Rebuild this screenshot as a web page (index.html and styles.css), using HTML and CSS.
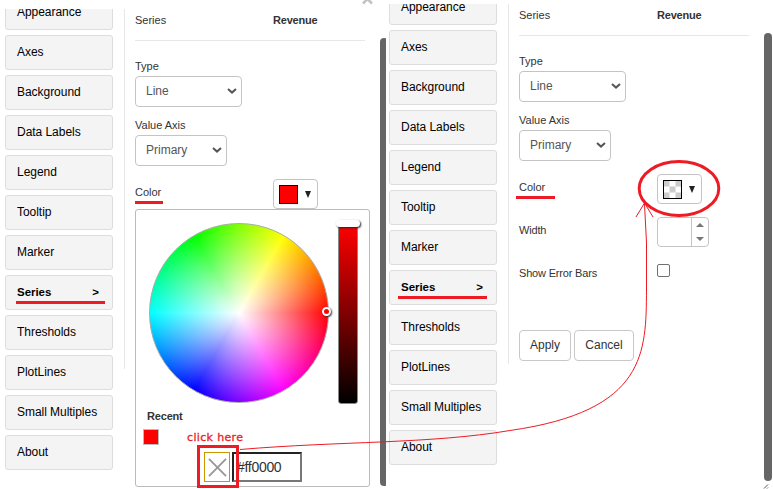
FILE: index.html
```html
<!DOCTYPE html>
<html lang="en">
<head>
<meta charset="utf-8">
<title>Series color settings</title>
<link rel="stylesheet" href="styles.css">
</head>
<body>
<main class="stage">
  <section class="panel panel-before">
    <nav class="nav">
      <a class="tab">Appearance</a><a class="tab">Axes</a><a class="tab">Background</a><a class="tab">Data Labels</a><a class="tab">Legend</a><a class="tab">Tooltip</a><a class="tab">Marker</a><a class="tab active">Series <span>&gt;</span></a><a class="tab">Thresholds</a><a class="tab">PlotLines</a><a class="tab">Small Multiples</a><a class="tab">About</a>
    </nav>
    <div class="form">
      <div class="row head"><span>Series</span><b>Revenue</b></div>
      <label class="caption">Type</label>
      <div class="select wide"><span>Line</span><svg class="chev" viewBox="0 0 10 6"><path d="M1 1l4 3.600L9 1"/></svg></div>
      <label class="caption">Value Axis</label>
      <div class="select"><span>Primary</span><svg class="chev" viewBox="0 0 10 6"><path d="M1 1l4 3.600L9 1"/></svg></div>
      <div class="row color-row"><span>Color</span>
        <div class="color-btn"><i class="swatch red"></i><i class="caret"></i></div>
      </div>
      <div class="picker">
        <div class="picker-top">
          <div class="wheel"><i class="cursor"></i></div>
          <div class="shade"><i class="handle"></i></div>
        </div>
        <div class="recent">Recent</div>
        <i class="recent-swatch"></i>
        <div class="picker-entry">
          <div class="none-btn"><svg viewBox="0 0 20 20"><path d="M1 1l18 18M19 1L1 19"/></svg></div>
          <div class="hex">#ff0000</div>
        </div>
      </div>
    </div>
    <div class="scroll"></div>
  </section>
  <section class="panel panel-after">
    <nav class="nav">
      <a class="tab">Appearance</a><a class="tab">Axes</a><a class="tab">Background</a><a class="tab">Data Labels</a><a class="tab">Legend</a><a class="tab">Tooltip</a><a class="tab">Marker</a><a class="tab active">Series <span>&gt;</span></a><a class="tab">Thresholds</a><a class="tab">PlotLines</a><a class="tab">Small Multiples</a><a class="tab">About</a>
    </nav>
    <div class="form">
      <div class="row head"><span>Series</span><b>Revenue</b></div>
      <label class="caption">Type</label>
      <div class="select wide"><span>Line</span><svg class="chev" viewBox="0 0 10 6"><path d="M1 1l4 3.600L9 1"/></svg></div>
      <label class="caption">Value Axis</label>
      <div class="select"><span>Primary</span><svg class="chev" viewBox="0 0 10 6"><path d="M1 1l4 3.600L9 1"/></svg></div>
      <div class="row color-row"><span>Color</span>
        <div class="color-btn"><svg class="swatch" viewBox="0 0 17 17"><path fill="#fff" d="M0 0h17v17H0z"/><path fill="#ccc" d="M0 0h5.500v5.500H0zM11.500 0H17v5.500h-5.500zM5.500 5.500h6v6h-6zM0 11.500h5.500V17H0zM11.500 11.500H17V17h-5.500z"/></svg><i class="caret"></i></div>
      </div>
      <div class="row width-row"><span>Width</span>
        <div class="spinner"><div class="steps"><i class="up"></i><i class="down"></i></div></div>
      </div>
      <div class="row error-row"><span>Show Error Bars</span><i class="check"></i></div>
      <div class="actions"><div class="btn apply">Apply</div><div class="btn cancel">Cancel</div></div>
    </div>
    <div class="scroll"></div>
  </section>
  <svg class="marks" width="773" height="489" viewBox="0 0 773 489">
    <path class="close" d="M363 3.500L371.500 -5M363.500 -5L372 3.500"/>
    <path class="bar" d="M135 202.500h28M16 302.500h89M516 197.500h39M398 297.500h89"/>
    <rect class="box" x="198.500" y="446.500" width="39" height="40"/>
    <ellipse class="ring" cx="679" cy="188.500" rx="39.800" ry="27"/>
    <path class="arrow" d="M240 449.500C340 441 430 444 510 430.500C647 411 646 352 646.500 290V243L644.500 204M636 217L644.500 203L653 217"/>
    <path class="grip" d="M764 488.500l4-4M767 488.500l1-1"/>
  </svg>
  <span class="hint">click here</span>
</main>
</body>
</html>
```

FILE: styles.css
```css
* { box-sizing: border-box; }
body { margin: 0; background: #fff; overflow: hidden; font-family: "Liberation Sans", Arial, sans-serif; }
.stage { position: relative; width: 773px; height: 489px; display: flex; overflow: hidden; }
.panel { display: flex; flex: none; height: 489px; }
.panel-before { width: 386px; padding-top: 9px; margin-right: -2px; overflow: hidden; }
.panel-after { width: 389px; padding-top: 4px; }

.nav { width: 125px; height: 360px; flex: none; padding-left: 5px; border-right: 1px solid #e7e7e7; clip-path: inset(0 0 -200px 0); }
.tab { display: flex; justify-content: space-between; align-items: center; width: 108px; height: 35px; margin-bottom: 5px; padding: 0 13px 2px 11px; border: 1px solid #ddd; border-radius: 3px; background: #f4f4f4; color: #000; font-size: 12px; letter-spacing: -0.040px; white-space: nowrap; }
.tab:first-child { margin-top: -14px; }
.active { font-size: 11.500px; font-weight: bold; }

.form { position: relative; width: 235px; margin-left: 10px; flex: none; color: #333; font-size: 11px; letter-spacing: -0.180px; }
.row { display: flex; }
.row > :first-child { width: 138px; flex: none; }
.head { width: 230px; height: 32px; padding-top: 5px; border-bottom: 1px solid #e7e7e7; margin-bottom: 18px; line-height: 13px; letter-spacing: 0; }
.head b { letter-spacing: -0.200px; }
.caption { display: block; height: 17px; line-height: 14px; letter-spacing: 0; }
.select { display: flex; align-items: center; justify-content: space-between; width: 92px; height: 31px; margin-bottom: 11px; padding: 0 4px 2px 10px; border: 1px solid #c4c4c4; border-radius: 4px; background: #fff; color: #555; font-size: 12px; letter-spacing: 0; }
.wide { width: 107px; }
.chev { width: 10px; height: 6px; }
.chev path { fill: none; stroke: #555; stroke-width: 2; }
.color-row { height: 30px; margin-top: 13px; align-items: center; letter-spacing: 0; }
.color-row > span { padding-bottom: 4px; }
.color-btn { display: flex; align-items: center; width: 45px; height: 30px; padding: 0 6px 0 5px; justify-content: space-between; border: 1px solid #c4c4c4; border-radius: 4px; background: #fff; }
.swatch { display: block; width: 19px; height: 19px; border: 1px solid #000; }
.red { background: #f00; }
.caret { border: 3.500px solid transparent; border-top: 7px solid #222; border-bottom: 0; }

.width-row { height: 30px; margin-top: 13px; align-items: center; }
.width-row > span { padding-bottom: 4px; }
.spinner { display: flex; justify-content: flex-end; width: 52px; height: 30px; border: 1px solid #c4c4c4; border-radius: 4px; }
.steps { display: flex; flex-direction: column; align-items: center; justify-content: space-between; width: 17px; padding: 5px 0; border-left: 1px solid #c4c4c4; }
.up, .down { border: 4px solid transparent; }
.up { border-bottom-color: #777; border-top: 0; }
.down { border-top-color: #777; border-bottom: 0; }
.error-row { margin-top: 17px; height: 17px; }
.error-row > span { padding-top: 3px; line-height: 13px; }
.check { width: 13px; height: 13px; border: 1px solid #707070; border-radius: 2px; }
.actions { display: flex; gap: 3px; margin-top: 49px; letter-spacing: 0; }
.btn { display: flex; align-items: center; justify-content: center; width: 52px; height: 31px; padding-bottom: 2px; border: 1px solid #c8c8c8; border-radius: 4px; font-size: 12px; }
.cancel { width: 60px; }
.scroll { width: 8px; height: 448px; margin: 29px 0 0 10px; flex: none; border-radius: 4px; background: #666; }

.picker { position: absolute; left: 0; top: 200px; width: 235px; height: 278px; padding: 13px 9px 0 13px; border: 1px solid #bbb; border-radius: 3px; background: #fff; }
.picker-top { display: flex; gap: 9px; }
.wheel { position: relative; width: 180px; height: 180px; border: 1px solid #aaa; border-radius: 50%; background: radial-gradient(closest-side, #fff, rgba(255,255,255,0)), conic-gradient(from 90deg, #f00, #f0f, #00f, #0ff, #0f0, #ff0, #f00); }
.cursor { position: absolute; left: 172px; top: 83px; width: 9px; height: 9px; border: 2px solid #fff; border-radius: 50%; background: #f00; box-shadow: 1px 1px 2px #333; }
.shade { position: relative; width: 20px; height: 181px; border: 1px solid #888; border-radius: 3px; background: linear-gradient(#f00, #000); }
.handle { position: absolute; left: -3px; top: -4px; width: 24px; height: 7px; border-radius: 4px; background: #fff; box-shadow: 1px 1px 2px #222; }
.recent { margin: 5px 0 0 -2px; line-height: 14px; font-weight: bold; font-size: 11px; }
.recent-swatch { display: block; width: 16px; height: 16px; margin: 6px 0 0 -6px; border: 1px solid #bbb; background: #f00; }
.picker-entry { display: flex; gap: 2px; margin: 7px 0 0 55px; }
.none-btn { display: flex; align-items: center; justify-content: center; width: 26px; height: 30px; border: 1px solid #cc9500; }
.none-btn svg { width: 19px; height: 19px; }
.none-btn path { stroke: #999; stroke-width: 2; }
.hex { width: 70px; height: 30px; padding: 0 3px; border: 2px solid; border-color: #222 #777 #777 #222; color: #333; font-size: 14px; line-height: 26px; letter-spacing: -0.300px; }

.marks { position: absolute; left: 0; top: 0; fill: none; stroke: #ed1c24; }
.bar, .box, .ring { stroke-width: 3; }
.arrow { stroke-width: 1; }
.close { stroke: #c2c2c2; stroke-width: 2.500; }
.grip { stroke: #555; }
.hint { position: absolute; left: 187px; top: 431px; color: #ed1c24; font: 11px/14px "DejaVu Sans", sans-serif; letter-spacing: 0.350px; -webkit-text-stroke: 0.300px #ed1c24; white-space: nowrap; }
```
